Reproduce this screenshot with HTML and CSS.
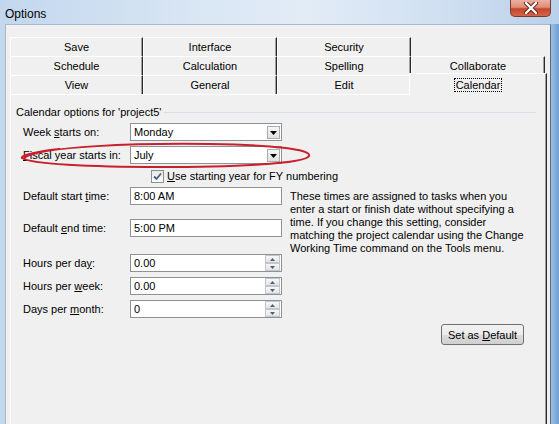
FILE: index.html
```html
<!DOCTYPE html>
<html>
<head>
<meta charset="utf-8">
<title>Options</title>
<link rel="stylesheet" href="styles.css">
</head>
<body>
<div class="window">
  <div class="titlebar">
    <span class="title">Options</span>
    <div class="close">
      <svg width="16" height="12" viewBox="0 0 16 12">
        <path d="M3 1 L13 11 M13 1 L3 11" fill="none" stroke="#5a2418" stroke-width="4.2" stroke-linecap="round"/>
        <path d="M3 1 L13 11 M13 1 L3 11" fill="none" stroke="#ffffff" stroke-width="2.4" stroke-linecap="round"/>
      </svg>
    </div>
  </div>
  <div class="frame">
    <div class="client">
      <div class="tabs">
        <div class="tabrow">
          <div class="tab first">Save</div>
          <div class="tab">Interface</div>
          <div class="tab">Security</div>
        </div>
        <div class="tabrow">
          <div class="tab first">Schedule</div>
          <div class="tab">Calculation</div>
          <div class="tab">Spelling</div>
          <div class="tab">Collaborate</div>
        </div>
        <div class="tabrow">
          <div class="tab first">View</div>
          <div class="tab">General</div>
          <div class="tab">Edit</div>
          <div class="tab sel"><span class="focus">Calendar</span></div>
        </div>
      </div>
      <div class="pane">
        <div class="group-head"><span>Calendar options for 'project5'</span><span class="rule"></span></div>
        <div class="form">
          <div class="lbl r1">Week <u>s</u>tarts on:</div>
          <div class="field combo r1">Monday<span class="drop"><svg width="7" height="4" viewBox="0 0 7 4"><path d="M0 0 H7 L3.5 4 Z" fill="#000"/></svg></span></div>

          <div class="lbl r2"><u>F</u>iscal year starts in:</div>
          <div class="field combo r2">July<span class="drop"><svg width="7" height="4" viewBox="0 0 7 4"><path d="M0 0 H7 L3.5 4 Z" fill="#000"/></svg></span></div>

          <div class="check r3">
            <span class="box"><svg width="9" height="9" viewBox="0 0 9 9"><path d="M1 4.5 L3.5 7 L8 1.5" fill="none" stroke="#4a5c86" stroke-width="1.8"/></svg></span>
            <span><u>U</u>se starting year for FY numbering</span>
          </div>

          <div class="lbl r4">Default start <u>t</u>ime:</div>
          <div class="field r4">8:00 AM</div>

          <div class="desc">These times are assigned to tasks when you<br>enter a start or finish date without specifying a<br>time. If you change this setting, consider<br>matching the project calendar using the Change<br>Working Time command on the Tools menu.</div>

          <div class="lbl r5">Default <u>e</u>nd time:</div>
          <div class="field r5">5:00 PM</div>

          <div class="lbl r6">Hours per da<u>y</u>:</div>
          <div class="field spin r6">0.00<span class="spinbtns"><span class="sb"><svg width="5" height="3" viewBox="0 0 5 3"><path d="M0 3 H5 L2.5 0 Z" fill="#4d5d80"/></svg></span><span class="sb"><svg width="5" height="3" viewBox="0 0 5 3"><path d="M0 0 H5 L2.5 3 Z" fill="#4d5d80"/></svg></span></span></div>

          <div class="lbl r7">Hours per <u>w</u>eek:</div>
          <div class="field spin r7">0.00<span class="spinbtns"><span class="sb"><svg width="5" height="3" viewBox="0 0 5 3"><path d="M0 3 H5 L2.5 0 Z" fill="#4d5d80"/></svg></span><span class="sb"><svg width="5" height="3" viewBox="0 0 5 3"><path d="M0 0 H5 L2.5 3 Z" fill="#4d5d80"/></svg></span></span></div>

          <div class="lbl r8">Days per <u>m</u>onth:</div>
          <div class="field spin r8">0<span class="spinbtns"><span class="sb"><svg width="5" height="3" viewBox="0 0 5 3"><path d="M0 3 H5 L2.5 0 Z" fill="#4d5d80"/></svg></span><span class="sb"><svg width="5" height="3" viewBox="0 0 5 3"><path d="M0 0 H5 L2.5 3 Z" fill="#4d5d80"/></svg></span></span></div>
        </div>
        <div class="actions"><button class="btn">Set as <u>D</u>efault</button></div>
      </div>
    </div>
  </div>
  <svg class="mark" width="559" height="424" viewBox="0 0 559 424">
    <path d="M24 158 C 40 146, 140 143, 210 144 C 270 145, 312 149, 309 156 C 305 164, 230 167, 160 167 C 90 167, 30 164, 22 158 C 20 155, 40 151, 60 149" fill="none" stroke="#c8202c" stroke-width="2"/>
  </svg>
</div>
</body>
</html>
```
FILE: styles.css
```css
html, body {
  margin: 0;
  padding: 0;
}
body {
  font-family: "Liberation Sans", Arial, sans-serif;
  font-size: 11px;
  color: #000;
}
.window {
  position: relative;
  width: 559px;
  height: 424px;
  overflow: hidden;
  display: flex;
  flex-direction: column;
  background: linear-gradient(90deg, #c2d7ee 0%, #d9e6f4 35%, #e2ecf7 55%, #cfdff1 80%, #b9d0ea 100%);
}
.titlebar {
  height: 24px;
  display: flex;
  justify-content: space-between;
  align-items: flex-start;
  flex: none;
}
.title {
  font-size: 12px;
  padding: 7px 0 0 5px;
  color: #000;
}
.close {
  width: 41px;
  height: 17px;
  margin-right: 8px;
  box-sizing: border-box;
  border: 1px solid #7c3a2c;
  border-top: none;
  border-radius: 0 0 5px 5px;
  background: linear-gradient(#eab1a2 0%, #df8e78 45%, #c9452c 55%, #d4654a 100%);
  display: flex;
  align-items: center;
  justify-content: center;
}
.frame {
  flex: 1;
  display: flex;
  padding-left: 5px;
  padding-right: 8px;
  background: linear-gradient(90deg, #c3d8ee 0 5px, transparent 5px), linear-gradient(90deg, #9fbfe2, #6e9fd4);
  background-size: auto, 8px 100%;
  background-position: 0 0, right 0 top 0;
  background-repeat: no-repeat;
}
.client {
  flex: 1;
  background: #f0f0f0;
  border-top: 1px solid #a9b8c8;
  border-left: 1px solid #a9b8c8;
  border-right: 1px solid #5f6a78;
  padding: 12px 3px 0 4px;
  display: flex;
  flex-direction: column;
}
.tabs {
  display: flex;
  flex-direction: column;
}
.tabrow {
  display: flex;
  height: 19px;
}
.tab {
  width: 134px;
  height: 19px;
  box-sizing: border-box;
  border-top: 1px solid #ffffff;
  border-left: 1px solid #ffffff;
  border-right: 1px solid #2a2a2a;
  box-shadow: inset -1px 0 0 #a0a0a0;
  text-align: center;
  line-height: 18px;
  background: #f0f0f0;
  flex: none;
}
.tab.first {
  width: 133px;
}
.tab.sel {
  position: relative;
  z-index: 1;
  width: 138px;
  height: 22px;
  margin: -2px -2px 0 -2px;
  line-height: 20px;
  padding-top: 1px;
}
.focus {
  outline: 1px dotted #000;
  outline-offset: 0;
  padding: 0 1px;
}
.pane {
  flex: 1;
  border-top: 1px solid #ffffff;
  border-left: 1px solid #ffffff;
  border-right: 1px solid #2a2a2a;
  box-shadow: inset -1px 0 0 #a0a0a0;
  padding: 0 22px 0 12px;
}
.group-head {
  display: flex;
  align-items: center;
  height: 14px;
  margin: 10px -12px 0 -7px;
  gap: 3px;
}
.group-head .rule {
  flex: 1;
  border-top: 1px solid #d5dfe5;
}
.form {
  margin-top: 4px;
  display: grid;
  grid-template-columns: 107px 152px 8px 1fr;
  grid-template-rows: 18px 23px 19px 22px 32px 35px 23px 23px;
}
.lbl {
  grid-column: 1;
  align-self: end;
  height: 18px;
  line-height: 18px;
  white-space: nowrap;
}
.field {
  grid-column: 2;
  align-self: end;
  position: relative;
  height: 18px;
  box-sizing: border-box;
  border: 1px solid #8e9296;
  background: #ffffff;
  padding-left: 3px;
  line-height: 16px;
}
.r1 { grid-row: 1; }
.r2 { grid-row: 2; }
.r3 { grid-row: 3; }
.r4 { grid-row: 4; }
.r5 { grid-row: 5; }
.r6 { grid-row: 6; }
.r7 { grid-row: 7; }
.r8 { grid-row: 8; }
.drop {
  position: absolute;
  right: 1px;
  top: 2px;
  width: 13px;
  height: 13px;
  box-sizing: border-box;
  border: 1px solid #a9acb0;
  background: linear-gradient(#f6f6f6, #e1e1e1);
  display: flex;
  align-items: center;
  justify-content: center;
}
.spinbtns {
  position: absolute;
  right: 1px;
  top: 0;
  width: 15px;
  display: flex;
  flex-direction: column;
}
.sb {
  height: 8px;
  box-sizing: border-box;
  border: 1px solid #c3c6ca;
  background: linear-gradient(#f7f7f7, #e4e4e4);
  display: flex;
  align-items: center;
  justify-content: center;
}
.check {
  grid-column: 2 / 5;
  align-self: end;
  height: 14px;
  display: flex;
  align-items: center;
  padding-left: 21px;
  gap: 3px;
  white-space: nowrap;
}
.box {
  width: 13px;
  height: 13px;
  box-sizing: border-box;
  border: 1px solid #8f8f8f;
  background: linear-gradient(#e6e6e6, #ffffff);
  display: flex;
  align-items: center;
  justify-content: center;
  flex: none;
}
.desc {
  grid-column: 4;
  grid-row: 4 / 9;
  align-self: start;
  padding-top: 7px;
  line-height: 13px;
  white-space: nowrap;
}
.actions {
  display: flex;
  justify-content: flex-end;
  margin-top: 6px;
}
.btn {
  width: 83px;
  height: 21px;
  box-sizing: border-box;
  border: 1px solid #707070;
  border-radius: 3px;
  background: linear-gradient(#f2f2f2 0%, #ebebeb 50%, #dddddd 51%, #cfcfcf 100%);
  font-family: "Liberation Sans", Arial, sans-serif;
  font-size: 11px;
  color: #000;
  padding: 0;
}
.mark {
  position: absolute;
  left: 0;
  top: 0;
  pointer-events: none;
}
```
